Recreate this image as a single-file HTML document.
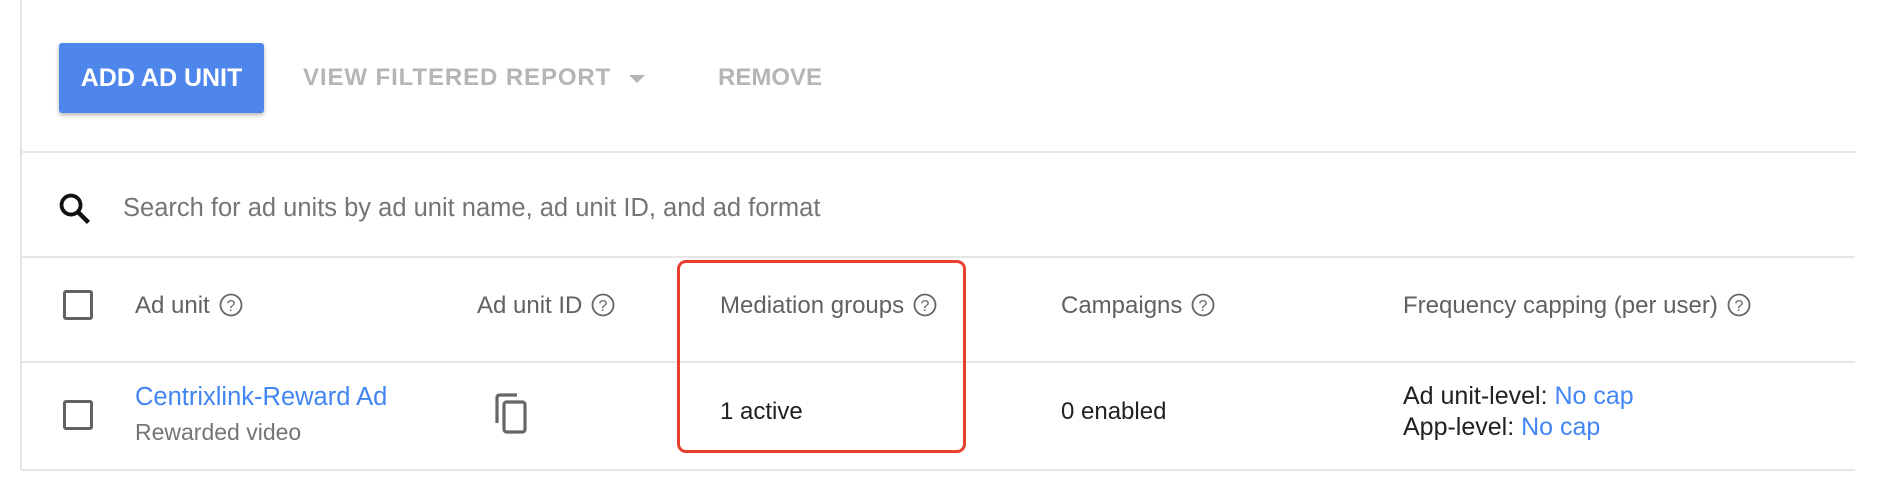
<!DOCTYPE html>
<html><head><style>
body{margin:0;width:1904px;height:490px;background:#fff;font-family:"Liberation Sans",Arial,sans-serif;position:relative;overflow:hidden}
.a{position:absolute;white-space:nowrap}
.hl{position:absolute;left:21px;width:1834px;height:2px;background:#e6e6e6}
.cb{position:absolute;width:24px;height:24px;border:3px solid #616161;border-radius:3px}
.h{color:#616161;font-size:24px}
.q{display:inline-block;width:24px;height:24px;vertical-align:-4px;margin-left:9px}
.t{color:#212121;font-size:24px}
.b{color:#4285f4}
.btn{font-weight:bold;font-size:24px}
</style></head><body>
<svg width="0" height="0" style="position:absolute"><symbol id="q" viewBox="0 0 24 24"><circle cx="12" cy="12" r="10.5" fill="none" stroke="#666" stroke-width="1.8"/><text x="12" y="18" text-anchor="middle" font-family="Liberation Sans" font-size="16" fill="#666">?</text></symbol></svg>
<div class="a" style="left:20px;top:0;width:2px;height:470px;background:#e3e3e3"></div>
<div class="a btn" style="left:59px;top:43px;width:205px;height:70px;background:#4f86ec;border-radius:3px;box-shadow:0 2px 4px rgba(0,0,0,.3);color:#fff;font-size:25px;line-height:70px;text-align:center">ADD AD UNIT</div>
<div class="a btn" style="left:303px;top:64px;color:#b5b5b5;letter-spacing:0.9px">VIEW FILTERED REPORT</div>
<div class="a" style="left:629px;top:75px;width:0;height:0;border-left:8px solid transparent;border-right:8px solid transparent;border-top:8px solid #b5b5b5"></div>
<div class="a btn" style="left:718px;top:64px;color:#b5b5b5">REMOVE</div>
<div class="hl" style="top:151px"></div>
<svg class="a" style="left:56px;top:190px" width="38" height="38" viewBox="0 0 24 24"><circle cx="9.5" cy="9.5" r="6" fill="none" stroke="#111" stroke-width="2.4"/><path d="M14 14l6.5 6.5" stroke="#111" stroke-width="2.8"/></svg>
<div class="a" style="left:123px;top:194px;color:#757575;font-size:25.5px">Search for ad units by ad unit name, ad unit ID, and ad format</div>
<div class="hl" style="top:256px"></div>
<div class="cb" style="left:63px;top:290px"></div>
<div class="a h" style="left:135px;top:292px">Ad unit<svg class="q"><use href="#q"/></svg></div>
<div class="a h" style="left:477px;top:292px">Ad unit ID<svg class="q"><use href="#q"/></svg></div>
<div class="a h" style="left:720px;top:292px">Mediation groups<svg class="q"><use href="#q"/></svg></div>
<div class="a h" style="left:1061px;top:292px">Campaigns<svg class="q"><use href="#q"/></svg></div>
<div class="a h" style="left:1403px;top:292px">Frequency capping (per user)<svg class="q"><use href="#q"/></svg></div>
<div class="hl" style="top:361px"></div>
<div class="cb" style="left:63px;top:400px"></div>
<div class="a b" style="left:135px;top:383px;font-size:25.5px">Centrixlink-Reward Ad</div>
<div class="a" style="left:135px;top:419px;font-size:23px;color:#757575">Rewarded video</div>
<svg class="a" style="left:494px;top:393px" width="36" height="42" viewBox="0 0 18 21"><path d="M11.5 1H3C2 1 1.5 1.5 1.5 2.5V15" fill="none" stroke="#666" stroke-width="1.6"/><rect x="5" y="4.5" width="10.5" height="15" rx="1.3" fill="none" stroke="#666" stroke-width="1.6"/></svg>
<div class="a t" style="left:720px;top:398px">1 active</div>
<div class="a t" style="left:1061px;top:398px">0 enabled</div>
<div class="a t" style="left:1403px;top:382px;font-size:25px">Ad unit-level: <span class="b">No cap</span></div>
<div class="a t" style="left:1403px;top:413px;font-size:25px">App-level: <span class="b">No cap</span></div>
<div class="hl" style="top:469px"></div>
<div class="a" style="left:677px;top:260px;width:283px;height:187px;border:3px solid #e8402f;border-radius:9px"></div>
</body></html>
